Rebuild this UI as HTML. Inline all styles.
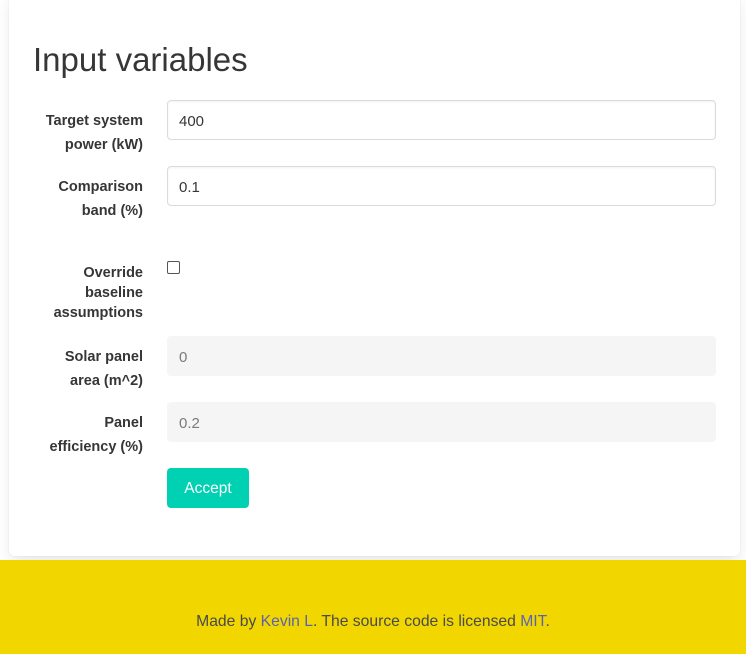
<!DOCTYPE html>
<html><head><style>
body{margin:0;width:746px;height:654px;background:#fff;font-family:"Liberation Sans",sans-serif;position:relative;overflow:hidden}
.box{position:absolute;left:9px;top:-10px;width:731px;height:566px;background:#fff;border-radius:6px;box-shadow:0 0.5em 1em -0.125em rgba(10,10,10,.1),0 0 0 1px rgba(10,10,10,.02)}
h1{position:absolute;left:33px;top:40px;margin:0;font-size:33px;font-weight:normal;color:#363636;line-height:40px}
.lbl{position:absolute;right:603px;text-align:right;font-weight:bold;font-size:14.5px;color:#363636;line-height:24px;width:140px;white-space:nowrap}
.inp{position:absolute;left:167px;height:38px;border:1px solid #dbdbdb;border-radius:4px;box-shadow:inset 0 1px 2px rgba(10,10,10,.05);font-size:15px;color:#363636;line-height:41px;padding-left:11px;box-sizing:content-box;width:536px}
.dis{background:#f5f5f5;border-color:#f5f5f5;color:#7a7a7a;box-shadow:none}
.cb{position:absolute;left:167px;top:261px;width:11px;height:11px;border:1px solid #555;border-radius:2px}
.btn{position:absolute;left:167px;top:468px;width:82px;height:40px;background:#00d1b2;border-radius:4px;color:#fff;font-size:15.5px;line-height:42px;text-align:center}
.foot{position:absolute;left:0;top:560px;width:746px;height:94px;background:#f2d600}
.foot p{margin:0;position:absolute;top:53px;width:100%;text-align:center;font-size:15.7px;color:#4a4a4a}
.foot a{color:#5a64b0;text-decoration:none}
</style></head><body>
<div class="box"></div>
<h1>Input variables</h1>
<div class="lbl" style="top:109px">Target system<br>power (kW)</div>
<div class="inp" style="top:100px">400</div>
<div class="lbl" style="top:175px">Comparison<br>band (%)</div>
<div class="inp" style="top:166px">0.1</div>
<div class="lbl" style="top:263px;line-height:20px">Override<br>baseline<br>assumptions</div>
<div class="cb"></div>
<div class="lbl" style="top:345px">Solar panel<br>area (m^2)</div>
<div class="inp dis" style="top:336px">0</div>
<div class="lbl" style="top:411px">Panel<br>efficiency (%)</div>
<div class="inp dis" style="top:402px">0.2</div>
<div class="btn">Accept</div>
<div class="foot"><p>Made by <a>Kevin L</a>. The source code is licensed <a>MIT</a>.</p></div>
</body></html>
